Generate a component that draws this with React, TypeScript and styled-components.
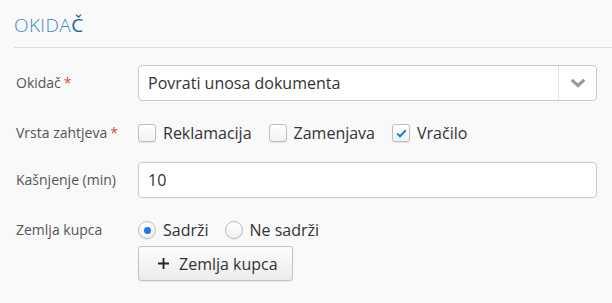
import React, { useState } from 'react';
import styled, { createGlobalStyle } from 'styled-components';

const GlobalStyle = createGlobalStyle`
  html, body {
    margin: 0;
    padding: 0;
    background: #f9f9f9;
    font-family: 'Open Sans', 'Noto Sans', sans-serif;
  }
`;

const Page = styled.div`
  width: 612px;
  height: 303px;
  overflow: hidden;
  background: #f9f9f9;
`;

const Header = styled.div`
  margin-left: 14px;
  padding-top: 12px;
  padding-bottom: 9px;
  border-bottom: 1px solid #dcdcdc;
`;

const Title = styled.h2`
  margin: 0;
  font-size: 19px;
  font-weight: 300;
  line-height: normal;
  color: #3d87cf;
  letter-spacing: 0.4px;

  span {
    color: #1d5fa6;
    font-weight: 400;
  }
`;

const Form = styled.div`
  padding: 17px 15px 0 16px;
`;

const Row = styled.div<{ $top?: number; $align?: string }>`
  display: flex;
  align-items: ${({ $align }) => $align || 'center'};
  margin-top: ${({ $top }) => $top || 0}px;
`;

const Label = styled.label`
  width: 122px;
  flex-shrink: 0;
  font-size: 14px;
  color: #555;
  line-height: 20px;
`;

const Required = styled.span`
  color: #e8473b;
  margin-left: 3px;
`;

const Control = styled.div`
  flex: 1;
  display: flex;
  flex-direction: column;
  align-items: flex-start;
`;

const SelectBox = styled.div`
  width: 100%;
  height: 36px;
  box-sizing: border-box;
  display: flex;
  align-items: stretch;
  background: #fff;
  border: 1px solid #c9c9c9;
  border-radius: 4px;
`;

const SelectValue = styled.div`
  flex: 1;
  display: flex;
  align-items: center;
  padding-left: 9px;
  font-size: 16px;
  color: #333;
`;

const SelectArrow = styled.div`
  width: 37px;
  border-left: 1px solid #e2e2e2;
  display: flex;
  align-items: center;
  justify-content: center;
`;

const TextInput = styled.input`
  width: 100%;
  height: 36px;
  box-sizing: border-box;
  background: #fff;
  border: 1px solid #c9c9c9;
  border-radius: 4px;
  padding: 0 9px;
  font-family: inherit;
  font-size: 16px;
  color: #333;
  outline: none;
`;

const Options = styled.div`
  display: flex;
  align-items: center;
  height: 20px;
`;

const Option = styled.label<{ $gap: number }>`
  display: flex;
  align-items: center;
  margin-right: ${({ $gap }) => $gap}px;
  font-size: 16px;
  color: #333;
  cursor: pointer;
`;

const Box = styled.span<{ $round?: boolean }>`
  width: 18px;
  height: 18px;
  box-sizing: border-box;
  border: 1px solid #bdbdbd;
  border-radius: ${({ $round }) => ($round ? '50%' : '3px')};
  background: linear-gradient(#ffffff, #f1f1f1);
  box-shadow: 0 1px 1px rgba(0, 0, 0, 0.08);
  display: flex;
  align-items: center;
  justify-content: center;
  margin-right: 7px;
  flex-shrink: 0;
`;

const Dot = styled.span`
  width: 7px;
  height: 7px;
  border-radius: 50%;
  background: #1f78e0;
`;

const AddButton = styled.button`
  margin-top: 6px;
  height: 35px;
  padding: 0 14px 0 19px;
  display: flex;
  align-items: center;
  gap: 10px;
  font-family: inherit;
  font-size: 16px;
  color: #333;
  background: linear-gradient(#fdfdfd, #ececec);
  border: 1px solid #c2c2c2;
  border-radius: 3px;
  box-shadow: 0 1px 1px rgba(0, 0, 0, 0.06);
`;

const Check = () => (
  <svg width="11" height="9" viewBox="0 0 11 9">
    <path d="M1.2 4.6 L4 7.3 L9.8 1.3" fill="none" stroke="#1f78e0" strokeWidth="2" />
  </svg>
);

const Chevron = () => (
  <svg width="16" height="10" viewBox="0 0 16 10">
    <path d="M1.8 1.8 L8 7.6 L14.2 1.8" fill="none" stroke="#9a9a9a" strokeWidth="3.2" />
  </svg>
);

const Plus = () => (
  <svg width="11" height="11" viewBox="0 0 11 11">
    <path d="M5.5 0 V11 M0 5.5 H11" stroke="#222" strokeWidth="1.8" />
  </svg>
);

export default function App() {
  const [types] = useState({ reklamacija: false, zamenjava: false, vracilo: true });
  const [contains] = useState(true);

  return (
    <Page>
      <GlobalStyle />
      <Header>
        <Title>
          OKIDA<span>Č</span>
        </Title>
      </Header>
      <Form>
        <Row>
          <Label>
            Okidač<Required>*</Required>
          </Label>
          <Control>
            <SelectBox>
              <SelectValue>Povrati unosa dokumenta</SelectValue>
              <SelectArrow>
                <Chevron />
              </SelectArrow>
            </SelectBox>
          </Control>
        </Row>
        <Row $top={22}>
          <Label>
            Vrsta zahtjeva<Required>*</Required>
          </Label>
          <Options>
            <Option $gap={17}>
              <Box>{types.reklamacija && <Check />}</Box>
              Reklamacija
            </Option>
            <Option $gap={17}>
              <Box>{types.zamenjava && <Check />}</Box>
              Zamenjava
            </Option>
            <Option $gap={0}>
              <Box>{types.vracilo && <Check />}</Box>
              Vračilo
            </Option>
          </Options>
        </Row>
        <Row $top={19}>
          <Label>Kašnjenje (min)</Label>
          <Control>
            <TextInput defaultValue="10" />
          </Control>
        </Row>
        <Row $top={22} $align="flex-start">
          <Label>Zemlja kupca</Label>
          <Control>
            <Options>
              <Option $gap={16}>
                <Box $round>{contains && <Dot />}</Box>
                Sadrži
              </Option>
              <Option $gap={0}>
                <Box $round>{!contains && <Dot />}</Box>
                Ne sadrži
              </Option>
            </Options>
            <AddButton>
              <Plus />
              Zemlja kupca
            </AddButton>
          </Control>
        </Row>
      </Form>
    </Page>
  );
}
